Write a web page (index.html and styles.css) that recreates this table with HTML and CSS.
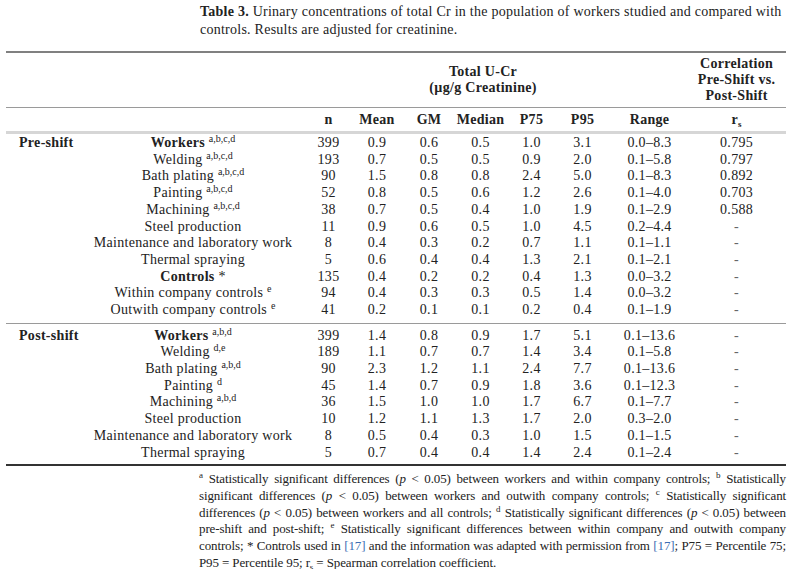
FILE: index.html
```html
<!DOCTYPE html>
<html lang="en">
<head>
<meta charset="utf-8">
<title>Table 3</title>
<link rel="stylesheet" href="styles.css">
</head>
<body>
<p class="caption"><b>Table 3.</b> Urinary concentrations of total Cr in the population of workers studied and compared with controls. Results are adjusted for creatinine.</p>
<table class="data">
  <colgroup>
    <col class="c-group"><col class="c-label"><col class="c-n"><col class="c-mean"><col class="c-gm"><col class="c-med"><col class="c-p75"><col class="c-p95"><col class="c-range"><col class="c-rs">
  </colgroup>
  <thead>
    <tr class="h1">
      <th></th><th></th><th></th>
      <th colspan="5" class="tot">Total U-Cr<br>(µg/g Creatinine)</th>
      <th></th>
      <th class="rs">Correlation<br>Pre-Shift vs.<br>Post-Shift</th>
    </tr>
    <tr class="h2">
      <th></th><th></th>
      <th>n</th><th class="mean">Mean</th><th>GM</th><th>Median</th><th>P75</th><th>P95</th><th>Range</th><th class="rs">r<sub>s</sub></th>
    </tr>
  </thead>
  <tbody class="pre">
    <tr class="first"><td class="grp">Pre-shift</td><td class="lbl"><b>Workers</b> <sup>a,b,c,d</sup></td><td>399</td><td class="mean">0.9</td><td>0.6</td><td>0.5</td><td>1.0</td><td>3.1</td><td>0.0–8.3</td><td class="rs">0.795</td></tr>
    <tr><td></td><td class="lbl">Welding <sup>a,b,c,d</sup></td><td>193</td><td class="mean">0.7</td><td>0.5</td><td>0.5</td><td>0.9</td><td>2.0</td><td>0.1–5.8</td><td class="rs">0.797</td></tr>
    <tr><td></td><td class="lbl">Bath plating <sup>a,b,c,d</sup></td><td>90</td><td class="mean">1.5</td><td>0.8</td><td>0.8</td><td>2.4</td><td>5.0</td><td>0.1–8.3</td><td class="rs">0.892</td></tr>
    <tr><td></td><td class="lbl">Painting <sup>a,b,c,d</sup></td><td>52</td><td class="mean">0.8</td><td>0.5</td><td>0.6</td><td>1.2</td><td>2.6</td><td>0.1–4.0</td><td class="rs">0.703</td></tr>
    <tr><td></td><td class="lbl">Machining <sup>a,b,c,d</sup></td><td>38</td><td class="mean">0.7</td><td>0.5</td><td>0.4</td><td>1.0</td><td>1.9</td><td>0.1–2.9</td><td class="rs">0.588</td></tr>
    <tr><td></td><td class="lbl">Steel production</td><td>11</td><td class="mean">0.9</td><td>0.6</td><td>0.5</td><td>1.0</td><td>4.5</td><td>0.2–4.4</td><td class="rs dash">-</td></tr>
    <tr><td></td><td class="lbl">Maintenance and laboratory work</td><td>8</td><td class="mean">0.4</td><td>0.3</td><td>0.2</td><td>0.7</td><td>1.1</td><td>0.1–1.1</td><td class="rs dash">-</td></tr>
    <tr><td></td><td class="lbl">Thermal spraying</td><td>5</td><td class="mean">0.6</td><td>0.4</td><td>0.4</td><td>1.3</td><td>2.1</td><td>0.1–2.1</td><td class="rs dash">-</td></tr>
    <tr><td></td><td class="lbl"><b>Controls</b> *</td><td>135</td><td class="mean">0.4</td><td>0.2</td><td>0.2</td><td>0.4</td><td>1.3</td><td>0.0–3.2</td><td class="rs dash">-</td></tr>
    <tr><td></td><td class="lbl">Within company controls <sup>e</sup></td><td>94</td><td class="mean">0.4</td><td>0.3</td><td>0.3</td><td>0.5</td><td>1.4</td><td>0.0–3.2</td><td class="rs dash">-</td></tr>
    <tr class="last"><td></td><td class="lbl">Outwith company controls <sup>e</sup></td><td>41</td><td class="mean">0.2</td><td>0.1</td><td>0.1</td><td>0.2</td><td>0.4</td><td>0.1–1.9</td><td class="rs dash">-</td></tr>
  </tbody>
  <tbody class="post">
    <tr class="first"><td class="grp">Post-shift</td><td class="lbl"><b>Workers</b> <sup>a,b,d</sup></td><td>399</td><td class="mean">1.4</td><td>0.8</td><td>0.9</td><td>1.7</td><td>5.1</td><td>0.1–13.6</td><td class="rs dash">-</td></tr>
    <tr><td></td><td class="lbl">Welding <sup>d,e</sup></td><td>189</td><td class="mean">1.1</td><td>0.7</td><td>0.7</td><td>1.4</td><td>3.4</td><td>0.1–5.8</td><td class="rs dash">-</td></tr>
    <tr><td></td><td class="lbl">Bath plating <sup>a,b,d</sup></td><td>90</td><td class="mean">2.3</td><td>1.2</td><td>1.1</td><td>2.4</td><td>7.7</td><td>0.1–13.6</td><td class="rs dash">-</td></tr>
    <tr><td></td><td class="lbl">Painting <sup>d</sup></td><td>45</td><td class="mean">1.4</td><td>0.7</td><td>0.9</td><td>1.8</td><td>3.6</td><td>0.1–12.3</td><td class="rs dash">-</td></tr>
    <tr><td></td><td class="lbl">Machining <sup>a,b,d</sup></td><td>36</td><td class="mean">1.5</td><td>1.0</td><td>1.0</td><td>1.7</td><td>6.7</td><td>0.1–7.7</td><td class="rs dash">-</td></tr>
    <tr><td></td><td class="lbl">Steel production</td><td>10</td><td class="mean">1.2</td><td>1.1</td><td>1.3</td><td>1.7</td><td>2.0</td><td>0.3–2.0</td><td class="rs dash">-</td></tr>
    <tr><td></td><td class="lbl">Maintenance and laboratory work</td><td>8</td><td class="mean">0.5</td><td>0.4</td><td>0.3</td><td>1.0</td><td>1.5</td><td>0.1–1.5</td><td class="rs dash">-</td></tr>
    <tr class="last"><td></td><td class="lbl">Thermal spraying</td><td>5</td><td class="mean">0.7</td><td>0.4</td><td>0.4</td><td>1.4</td><td>2.4</td><td>0.1–2.4</td><td class="rs dash">-</td></tr>
  </tbody>
</table>
<p class="notes"><sup>a</sup> Statistically significant differences (<i>p</i> &lt; 0.05) between workers and within company controls; <sup>b</sup> Statistically significant differences (<i>p</i> &lt; 0.05) between workers and outwith company controls; <sup>c</sup> Statistically significant differences (<i>p</i> &lt; 0.05) between workers and all controls; <sup>d</sup> Statistically significant differences (<i>p</i> &lt; 0.05) between pre-shift and post-shift; <sup>e</sup> Statistically significant differences between within company and outwith company controls; * Controls used in <span class="ref">[17]</span> and the information was adapted with permission from <span class="ref">[17]</span>; P75 = Percentile 75; P95 = Percentile 95; r<sub>s</sub> = Spearman correlation coefficient.</p>
</body>
</html>
```
FILE: styles.css
```css
html, body {
  margin: 0;
  padding: 0;
  background: #ffffff;
}
body {
  font-family: "Liberation Serif", "Times New Roman", serif;
  color: #222222;
}
.caption {
  margin: 0 0 0 200px;
  padding-top: 3px;
  width: 588px;
  font-size: 14px;
  letter-spacing: 0.25px;
  line-height: 18px;
}
.caption b {
  font-weight: bold;
}
.data {
  margin: 12px 0 0 6px;
  width: 780px;
  border-collapse: separate;
  border-spacing: 0;
  table-layout: fixed;
  font-size: 14px;
  letter-spacing: 0.3px;
  line-height: 16.7px;
}
.c-group { width: 84px; }
.c-label { width: 215px; }
.c-n { width: 47px; }
.c-mean { width: 51px; }
.c-gm { width: 52px; }
.c-med { width: 51px; }
.c-p75 { width: 51px; }
.c-p95 { width: 51px; }
.c-range { width: 83px; }
.c-rs { width: 95px; }
.data th,
.data td {
  padding: 0;
  text-align: center;
  white-space: nowrap;
  font-weight: normal;
}
.data th {
  font-weight: bold;
}
.h1 th {
  border-top: 2px solid #808080;
  border-bottom: 1px solid #9a9a9a;
  padding: 3px 0;
  line-height: 16px;
  vertical-align: middle;
}
.h1 .tot {
  padding-left: 6px;
}
.h2 th {
  padding: 4px 0 2.3px;
  border-bottom: 3px solid #d6d6d6;
}
.data .rs {
  padding-right: 4px;
}
.data .mean {
  padding-right: 1px;
}
.data .lbl {
  padding-right: 9px;
}
.data .grp {
  text-align: left;
  padding-left: 13px;
  font-weight: bold;
}
.pre .first td { padding-top: 1px; }
.pre .last td {
  padding-bottom: 4.3px;
  border-bottom: 1px solid #9a9a9a;
}
.post .first td { padding-top: 3.6px; }
.post .last td {
  padding-bottom: 2.7px;
  border-bottom: 2px solid #333333;
}
.dash {
  color: #666666;
}
sup {
  font-size: 10px;
  line-height: 0;
  vertical-align: 5px;
  letter-spacing: 0;
}
sub {
  font-size: 9px;
  line-height: 0;
  vertical-align: -3px;
}
.notes {
  margin: 5px 0 0 199px;
  width: 587px;
  font-size: 13px;
  letter-spacing: -0.12px;
  line-height: 16.8px;
  text-align: justify;
}
.notes sup {
  font-size: 9px;
  vertical-align: 5px;
}
.ref {
  color: #3d6fb4;
}
```
